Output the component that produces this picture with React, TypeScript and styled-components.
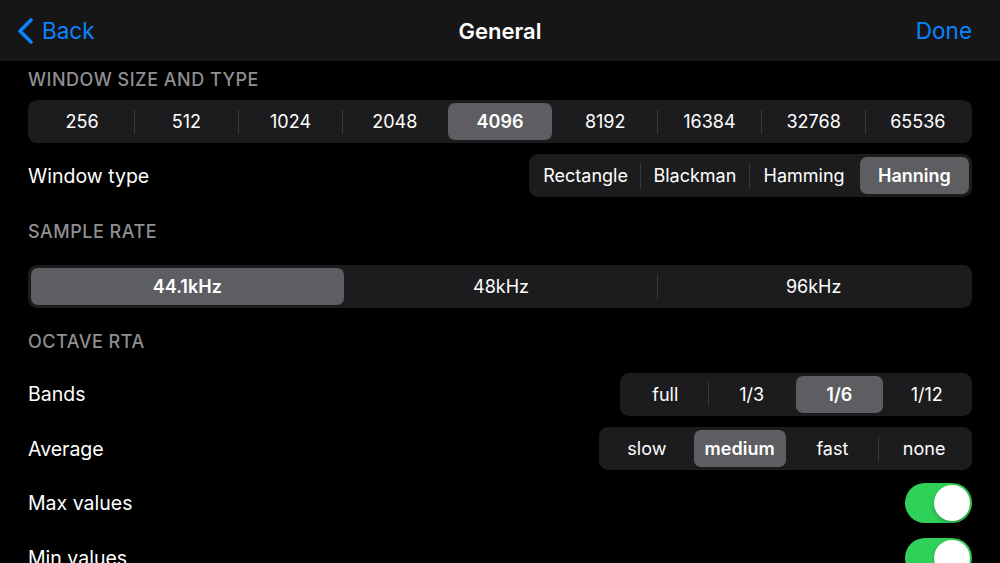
import React from "react";
import styled, { createGlobalStyle } from "styled-components";

const Global = createGlobalStyle`
  html, body { margin: 0; padding: 0; background: #000; overflow: hidden; }
  body { font-family: Inter, "Noto Sans", "Liberation Sans", sans-serif; color: #fff; -webkit-font-smoothing: antialiased; }
  * { box-sizing: border-box; }
`;

const Page = styled.div`
  width: 1000px;
  height: 563px;
  overflow: hidden;
  background: #000;
  display: flex;
  flex-direction: column;
`;

const NavBar = styled.div`
  height: 61px;
  flex: none;
  background: #161616;
  display: grid;
  grid-template-columns: 1fr auto 1fr;
  align-items: center;
  padding: 0 28px;
`;

const BackButton = styled.div`
  display: flex;
  align-items: center;
  gap: 8px;
  margin-left: -11px;
  color: #0a84ff;
  font-size: 22.5px;
`;

const Title = styled.div`
  font-size: 22px;
  font-weight: 600;
  text-align: center;
`;

const DoneButton = styled.div`
  justify-self: end;
  color: #0a84ff;
  font-size: 22.5px;
`;

const Content = styled.div`
  padding: 0 28px;
  display: flex;
  flex-direction: column;
`;

const SectionHeader = styled.div<{ $top: number; $bottom: number }>`
  font-size: 18px;
  line-height: 22px;
  color: #8e8e93;
  font-weight: 500;
  letter-spacing: 0.5px;
  text-transform: uppercase;
  padding-top: ${(p) => p.$top}px;
  padding-bottom: ${(p) => p.$bottom}px;
`;

const Row = styled.div<{ $height: number }>`
  height: ${(p) => p.$height}px;
  display: flex;
  align-items: center;
  justify-content: space-between;
`;

const Label = styled.div`
  font-size: 19.5px;
`;

const Segmented = styled.div<{ $width?: number }>`
  width: ${(p) => (p.$width ? `${p.$width}px` : "100%")};
  height: 43px;
  background: #1c1c1e;
  border-radius: 9px;
  padding: 3px 2px;
  display: flex;
  align-items: stretch;
`;

const Segment = styled.div<{ $selected: boolean; $sep: boolean }>`
  flex: 1 1 0;
  min-width: 0;
  position: relative;
  display: flex;
  align-items: center;
  justify-content: center;
  border-radius: 7px;
  margin: 0 ${(p) => (p.$selected ? 1 : 0)}px;
  font-size: 18px;
  font-weight: ${(p) => (p.$selected ? 600 : 400)};
  background: ${(p) => (p.$selected ? "#5e5e62" : "transparent")};
  color: #fff;
  &::before {
    content: "";
    display: ${(p) => (p.$sep ? "block" : "none")};
    position: absolute;
    left: -0.5px;
    top: 50%;
    width: 1px;
    height: 24px;
    margin-top: -12px;
    background: #3a3a3c;
  }
`;

const Toggle = styled.div<{ $on: boolean }>`
  width: 67px;
  height: 40px;
  border-radius: 20px;
  background: ${(p) => (p.$on ? "#30d158" : "#39393d")};
  padding: 2px;
  display: flex;
  justify-content: ${(p) => (p.$on ? "flex-end" : "flex-start")};
`;

const Knob = styled.div`
  width: 36px;
  height: 36px;
  border-radius: 50%;
  background: #fff;
  box-shadow: 0 2px 4px rgba(0, 0, 0, 0.25);
`;

function Seg({ items, selected, width }: { items: string[]; selected: number; width?: number }) {
  return (
    <Segmented $width={width}>
      {items.map((it, i) => (
        <Segment
          key={it}
          $selected={i === selected}
          $sep={i > 0 && i !== selected && i - 1 !== selected}
        >
          {it}
        </Segment>
      ))}
    </Segmented>
  );
}

export default function App() {
  return (
    <Page>
      <Global />
      <NavBar>
        <BackButton>
          <svg width="17" height="28" viewBox="0 0 17 28">
            <polyline
              points="14,3 3,14 14,25"
              fill="none"
              stroke="#0a84ff"
              strokeWidth="3.6"
              strokeLinecap="round"
              strokeLinejoin="round"
            />
          </svg>
          Back
        </BackButton>
        <Title>General</Title>
        <DoneButton>Done</DoneButton>
      </NavBar>
      <Content>
        <SectionHeader $top={8} $bottom={9}>Window size and type</SectionHeader>
        <Seg
          items={["256", "512", "1024", "2048", "4096", "8192", "16384", "32768", "65536"]}
          selected={4}
        />
        <Row $height={65}>
          <Label>Window type</Label>
          <Seg items={["Rectangle", "Blackman", "Hamming", "Hanning"]} selected={3} width={443} />
        </Row>
        <SectionHeader $top={13} $bottom={22}>Sample rate</SectionHeader>
        <Seg items={["44.1kHz", "48kHz", "96kHz"]} selected={0} />
        <SectionHeader $top={23} $bottom={14}>Octave RTA</SectionHeader>
        <Row $height={54}>
          <Label>Bands</Label>
          <Seg items={["full", "1/3", "1/6", "1/12"]} selected={2} width={352} />
        </Row>
        <Row $height={55}>
          <Label>Average</Label>
          <Seg items={["slow", "medium", "fast", "none"]} selected={1} width={373} />
        </Row>
        <Row $height={54}>
          <Label>Max values</Label>
          <Toggle $on>
            <Knob />
          </Toggle>
        </Row>
        <Row $height={55}>
          <Label>Min values</Label>
          <Toggle $on>
            <Knob />
          </Toggle>
        </Row>
      </Content>
    </Page>
  );
}
